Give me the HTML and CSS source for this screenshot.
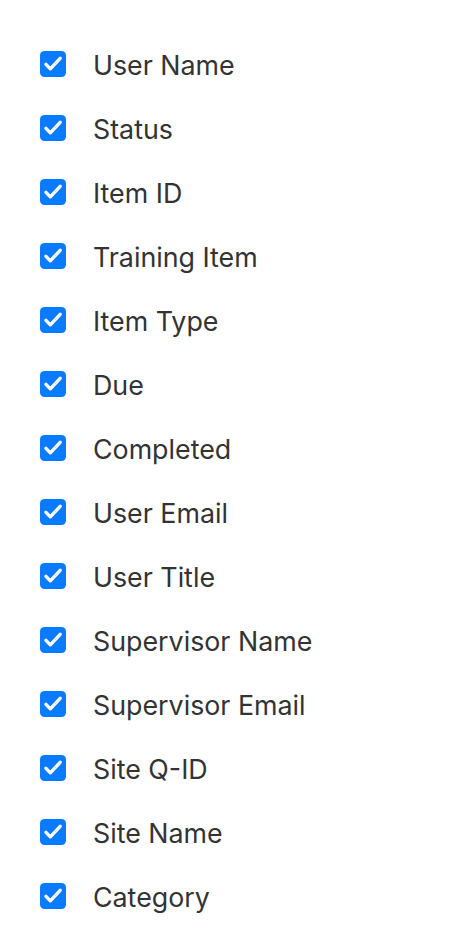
FILE: index.html
```html
<!DOCTYPE html>
<html>
<head>
<meta charset="utf-8">
<link rel="stylesheet" href="styles.css">
</head>
<body>
<ul class="columns">
  <li class="row"><span class="box"><svg viewBox="0 0 26 26" width="26" height="26"><rect width="26" height="26" rx="4.5" fill="#0a7aff"/><path d="M6 13.3 L10.3 17.8 L20.2 7.3" fill="none" stroke="#fff" stroke-width="3.4" stroke-linecap="round" stroke-linejoin="round"/></svg></span><span class="label">User Name</span></li>
  <li class="row"><span class="box"><svg viewBox="0 0 26 26" width="26" height="26"><rect width="26" height="26" rx="4.5" fill="#0a7aff"/><path d="M6 13.3 L10.3 17.8 L20.2 7.3" fill="none" stroke="#fff" stroke-width="3.4" stroke-linecap="round" stroke-linejoin="round"/></svg></span><span class="label">Status</span></li>
  <li class="row"><span class="box"><svg viewBox="0 0 26 26" width="26" height="26"><rect width="26" height="26" rx="4.5" fill="#0a7aff"/><path d="M6 13.3 L10.3 17.8 L20.2 7.3" fill="none" stroke="#fff" stroke-width="3.4" stroke-linecap="round" stroke-linejoin="round"/></svg></span><span class="label">Item ID</span></li>
  <li class="row"><span class="box"><svg viewBox="0 0 26 26" width="26" height="26"><rect width="26" height="26" rx="4.5" fill="#0a7aff"/><path d="M6 13.3 L10.3 17.8 L20.2 7.3" fill="none" stroke="#fff" stroke-width="3.4" stroke-linecap="round" stroke-linejoin="round"/></svg></span><span class="label">Training Item</span></li>
  <li class="row"><span class="box"><svg viewBox="0 0 26 26" width="26" height="26"><rect width="26" height="26" rx="4.5" fill="#0a7aff"/><path d="M6 13.3 L10.3 17.8 L20.2 7.3" fill="none" stroke="#fff" stroke-width="3.4" stroke-linecap="round" stroke-linejoin="round"/></svg></span><span class="label">Item Type</span></li>
  <li class="row"><span class="box"><svg viewBox="0 0 26 26" width="26" height="26"><rect width="26" height="26" rx="4.5" fill="#0a7aff"/><path d="M6 13.3 L10.3 17.8 L20.2 7.3" fill="none" stroke="#fff" stroke-width="3.4" stroke-linecap="round" stroke-linejoin="round"/></svg></span><span class="label">Due</span></li>
  <li class="row"><span class="box"><svg viewBox="0 0 26 26" width="26" height="26"><rect width="26" height="26" rx="4.5" fill="#0a7aff"/><path d="M6 13.3 L10.3 17.8 L20.2 7.3" fill="none" stroke="#fff" stroke-width="3.4" stroke-linecap="round" stroke-linejoin="round"/></svg></span><span class="label">Completed</span></li>
  <li class="row"><span class="box"><svg viewBox="0 0 26 26" width="26" height="26"><rect width="26" height="26" rx="4.5" fill="#0a7aff"/><path d="M6 13.3 L10.3 17.8 L20.2 7.3" fill="none" stroke="#fff" stroke-width="3.4" stroke-linecap="round" stroke-linejoin="round"/></svg></span><span class="label">User Email</span></li>
  <li class="row"><span class="box"><svg viewBox="0 0 26 26" width="26" height="26"><rect width="26" height="26" rx="4.5" fill="#0a7aff"/><path d="M6 13.3 L10.3 17.8 L20.2 7.3" fill="none" stroke="#fff" stroke-width="3.4" stroke-linecap="round" stroke-linejoin="round"/></svg></span><span class="label">User Title</span></li>
  <li class="row"><span class="box"><svg viewBox="0 0 26 26" width="26" height="26"><rect width="26" height="26" rx="4.5" fill="#0a7aff"/><path d="M6 13.3 L10.3 17.8 L20.2 7.3" fill="none" stroke="#fff" stroke-width="3.4" stroke-linecap="round" stroke-linejoin="round"/></svg></span><span class="label">Supervisor Name</span></li>
  <li class="row"><span class="box"><svg viewBox="0 0 26 26" width="26" height="26"><rect width="26" height="26" rx="4.5" fill="#0a7aff"/><path d="M6 13.3 L10.3 17.8 L20.2 7.3" fill="none" stroke="#fff" stroke-width="3.4" stroke-linecap="round" stroke-linejoin="round"/></svg></span><span class="label">Supervisor Email</span></li>
  <li class="row"><span class="box"><svg viewBox="0 0 26 26" width="26" height="26"><rect width="26" height="26" rx="4.5" fill="#0a7aff"/><path d="M6 13.3 L10.3 17.8 L20.2 7.3" fill="none" stroke="#fff" stroke-width="3.4" stroke-linecap="round" stroke-linejoin="round"/></svg></span><span class="label">Site Q-ID</span></li>
  <li class="row"><span class="box"><svg viewBox="0 0 26 26" width="26" height="26"><rect width="26" height="26" rx="4.5" fill="#0a7aff"/><path d="M6 13.3 L10.3 17.8 L20.2 7.3" fill="none" stroke="#fff" stroke-width="3.4" stroke-linecap="round" stroke-linejoin="round"/></svg></span><span class="label">Site Name</span></li>
  <li class="row"><span class="box"><svg viewBox="0 0 26 26" width="26" height="26"><rect width="26" height="26" rx="4.5" fill="#0a7aff"/><path d="M6 13.3 L10.3 17.8 L20.2 7.3" fill="none" stroke="#fff" stroke-width="3.4" stroke-linecap="round" stroke-linejoin="round"/></svg></span><span class="label">Category</span></li>
</ul>
</body>
</html>
```
FILE: styles.css
```css
html, body {
  margin: 0;
  padding: 0;
  background: #ffffff;
}
body {
  font-family: Inter, "Liberation Sans", sans-serif;
  color: #333333;
}
.columns {
  list-style: none;
  margin: 0;
  padding: 32px 0 0 40px;
}
.row {
  display: flex;
  align-items: center;
  height: 64px;
}
.box {
  display: flex;
  width: 26px;
  height: 26px;
  flex: none;
}
.box svg {
  display: block;
}
.label {
  margin-left: 27px;
  font-size: 26.8px;
  line-height: 32px;
  padding-top: 2px;
}
```
